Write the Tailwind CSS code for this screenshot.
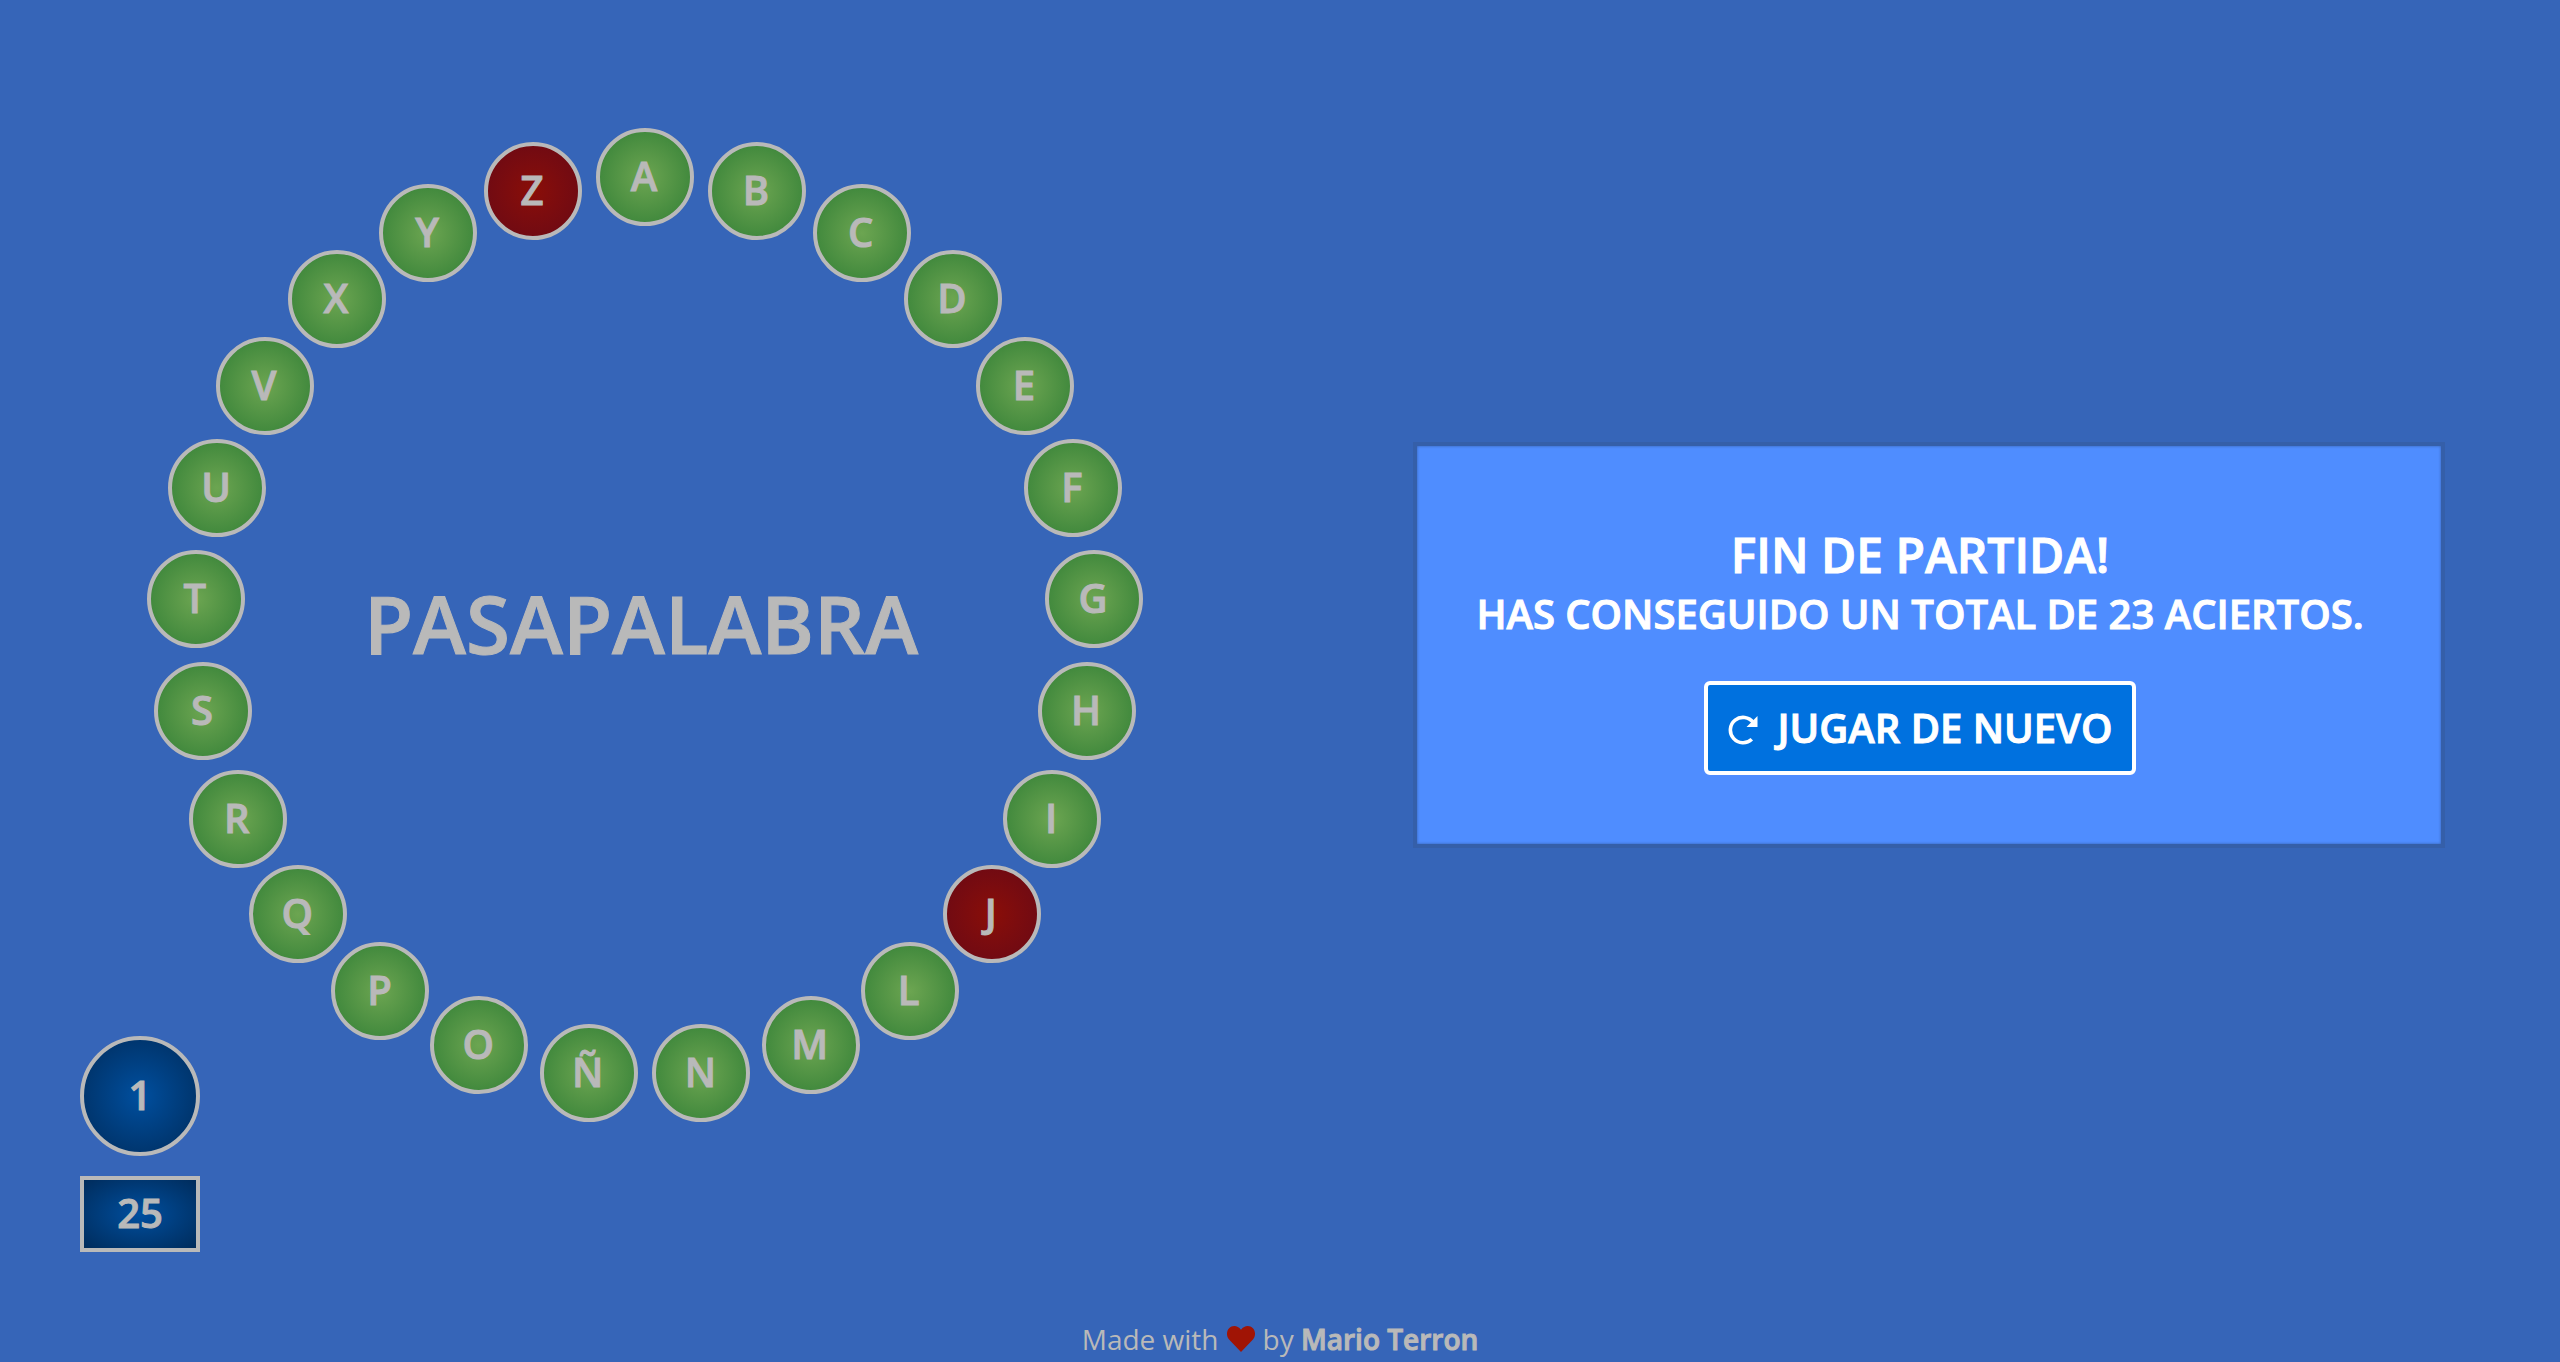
<!DOCTYPE html>
<html lang="es">
<head>
<meta charset="utf-8">
<meta name="viewport" content="width=device-width, initial-scale=1">
<title>Pasapalabra</title>
<script src="https://cdn.jsdelivr.net/npm/@tailwindcss/browser@4"></script>
</head>
<body class="flex min-h-screen flex-col bg-[#3665b8] font-['Open_Sans',sans-serif] text-[#b9b9b9]">
<main class="grid flex-1 grid-cols-2 [-webkit-text-stroke:1px_currentColor]">
  <section class="flex flex-col pt-32 pr-[70px] pl-20">
    <div class="relative mx-auto flex size-[998px] items-center justify-center">
      <h1 class="pr-2 pb-2 text-[80px] leading-none font-semibold">PASAPALABRA</h1>
      <ol class="text-[40px] font-semibold [&>li]:absolute [&>li]:top-[calc(50%_-_49px_-_450px_*_cos(var(--i)*14.4deg))] [&>li]:left-[calc(50%_-_49px_+_450px_*_sin(var(--i)*14.4deg))] [&>li]:flex [&>li]:size-[98px] [&>li]:items-center [&>li]:justify-center [&>li]:rounded-full [&>li]:border-4 [&>li]:border-[#b9b9b9] [&>li]:bg-radial [&>li]:from-[#6ca551] [&>li]:to-[#2f7f36] [&>li]:pr-[2px] [&>li]:pb-[2px] [&>li.wrong]:from-[#8a0e07] [&>li.wrong]:to-[#680914]">
        <li style="--i:0">A</li>
        <li style="--i:1">B</li>
        <li style="--i:2">C</li>
        <li style="--i:3">D</li>
        <li style="--i:4">E</li>
        <li style="--i:5">F</li>
        <li style="--i:6">G</li>
        <li style="--i:7">H</li>
        <li style="--i:8">I</li>
        <li class="wrong" style="--i:9">J</li>
        <li style="--i:10">L</li>
        <li style="--i:11">M</li>
        <li style="--i:12">N</li>
        <li style="--i:13">Ñ</li>
        <li style="--i:14">O</li>
        <li style="--i:15">P</li>
        <li style="--i:16">Q</li>
        <li style="--i:17">R</li>
        <li style="--i:18">S</li>
        <li style="--i:19">T</li>
        <li style="--i:20">U</li>
        <li style="--i:21">V</li>
        <li style="--i:22">X</li>
        <li style="--i:23">Y</li>
        <li class="wrong" style="--i:24">Z</li>
      </ol>
    </div>
    <div class="-mt-[90px] flex flex-col gap-5 self-start text-[40px] leading-[60px] font-semibold">
      <div class="flex size-[120px] items-center justify-center rounded-full border-4 border-[#b9b9b9] bg-radial from-[#004f9f] to-[#002c5c] pb-[2px]">1</div>
      <div class="flex h-[76px] w-[120px] items-center justify-center border-4 border-[#b9b9b9] bg-radial from-[#004f9f] to-[#002c5c] pb-[2px]">25</div>
    </div>
  </section>
  <section class="pt-[442px] pr-[115px] pl-[133px]">
    <div class="flex flex-col items-center border-4 border-[#355fa9] bg-[#4f8dff] pt-20 pr-[18px] pb-[69px] text-center font-semibold text-white inset-shadow-[0_0_3px_#355fa9]">
      <h2 class="text-[48px] leading-[58px]">FIN DE PARTIDA!</h2>
      <p class="text-[40px] leading-[60px]">HAS CONSEGUIDO UN TOTAL DE 23 ACIERTOS.</p>
      <button type="button" class="mt-[37px] flex h-[94px] items-center gap-5 rounded-md border-4 border-white bg-[#0071df] px-5 text-[40px]">
        <svg class="mt-1 size-[30px]" viewBox="0 0 30 30" fill="none" aria-hidden="true">
          <path d="M25.300 7.500A12.700 12.700 0 1 0 23.800 24.300" stroke="currentColor" stroke-width="3.600"/>
          <path d="M29.500 1v11H18.500z" fill="currentColor"/>
        </svg>
        JUGAR DE NUEVO
      </button>
    </div>
  </section>
</main>
<footer class="flex items-center justify-center pb-1 text-[28px] leading-[38px]">
  Made with
  <svg class="mx-2 size-7" viewBox="0 0 28 26" aria-hidden="true"><path fill="#a01405" d="M14 26 2.300 13.800C-.800 10.500-.700 5 2.100 2.200 5.300-.900 10.800-.700 14 3.800 17.200-.700 22.700-.900 25.900 2.200 28.700 5 28.800 10.500 25.700 13.800z"/></svg>
  by&nbsp;<a href="#" class="font-semibold [-webkit-text-stroke:1px_currentColor]">Mario Terron</a>
</footer>
</body>
</html>
